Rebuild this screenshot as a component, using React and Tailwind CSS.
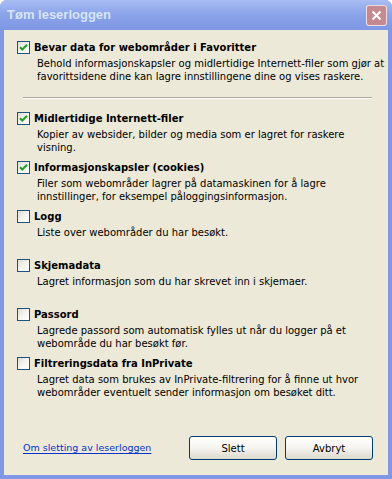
import React from 'react'

const items = [
  {
    label: 'Midlertidige Internett-filer',
    desc: 'Kopier av websider, bilder og media som er lagret for raskere visning.',
    checked: true,
  },
  {
    label: 'Informasjonskapsler (cookies)',
    desc: 'Filer som webområder lagrer på datamaskinen for å lagre innstillinger, for eksempel påloggingsinformasjon.',
    checked: true,
  },
  { label: 'Logg', desc: 'Liste over webområder du har besøkt.', checked: false },
  { label: 'Skjemadata', desc: 'Lagret informasjon som du har skrevet inn i skjemaer.', checked: false },
  {
    label: 'Passord',
    desc: 'Lagrede passord som automatisk fylles ut når du logger på et webområde du har besøkt før.',
    checked: false,
  },
  {
    label: 'Filtreringsdata fra InPrivate',
    desc: 'Lagret data som brukes av InPrivate-filtrering for å finne ut hvor webområder eventuelt sender informasjon om besøket ditt.',
    checked: false,
  },
]

function CheckBox({ checked }) {
  return (
    <span className="w-[13px] h-[13px] shrink-0 border border-[#1c5180] bg-gradient-to-br from-[#dcdbd5] via-[#f5f4ef] to-white flex items-center justify-center">
      {checked && (
        <svg width="9" height="9" viewBox="0 0 9 9">
          <path d="M1 4.2L3.3 6.5L8 1.8" stroke="#21a121" strokeWidth="2" fill="none" />
        </svg>
      )}
    </span>
  )
}

function Option({ label, desc, checked, className = '' }) {
  return (
    <div className={className}>
      <div className="flex items-center gap-[4px] h-[13px]">
        <CheckBox checked={checked} />
        <span className="font-bold text-[10px] leading-[13px] text-black">{label}</span>
      </div>
      <p className="pl-[20px] mt-[3px] text-[10px] leading-[13px] text-black">{desc}</p>
    </div>
  )
}

function XpButton({ children }) {
  return (
    <button className="w-[88px] h-[24px] rounded-[3px] border border-[#003c74] bg-gradient-to-b from-white via-[#f5f4f0] to-[#dcd9cc] text-[10px] text-black">
      {children}
    </button>
  )
}

export default function App() {
  return (
    <div
      className="w-[392px] h-[479px] flex flex-col bg-[#7f97e4] rounded-t-[7px] overflow-hidden"
      style={{ fontFamily: '"DejaVu Sans", sans-serif' }}
    >
      {/* title bar */}
      <div className="h-[30px] shrink-0 flex items-center justify-between pl-[7px] pr-[5px] bg-gradient-to-b from-[#a8bdf2] via-[#8aa2e9] to-[#7f97e4]">
        <span
          className="text-[13px] font-bold text-[#d8e4f8]"
          style={{ fontFamily: '"Liberation Sans", sans-serif' }}
        >
          Tøm leserloggen
        </span>
        <span className="w-[21px] h-[21px] rounded-[3px] border border-white/70 bg-[#c48a92] flex items-center justify-center">
          <svg width="11" height="11" viewBox="0 0 11 11">
            <path d="M1.5 1.5L9.5 9.5M9.5 1.5L1.5 9.5" stroke="white" strokeWidth="2" />
          </svg>
        </span>
      </div>

      {/* client area */}
      <div className="flex-1 mx-[4px] mb-[4px] bg-[#ece9d8] flex flex-col pl-[13px] pr-[4px] pt-[11px]">
        <Option
          label="Bevar data for webområder i Favoritter"
          desc={
            <>
              <span className="whitespace-nowrap">Behold informasjonskapsler og midlertidige Internett-filer som gjør at</span>
              <br />
              favorittsidene dine kan lagre innstillingene dine og vises raskere.
            </>
          }
          checked
          className="h-[56px]"
        />
        <div className="ml-[6px] mr-[12px] h-[2px] border-t border-[#aca899] bg-white" />
        <div className="mt-[13px]">
          {items.map((it) => (
            <Option key={it.label} {...it} className="h-[49px]" />
          ))}
        </div>
        <div className="mt-auto mb-[15px] mr-[8px] flex items-center justify-between">
          <a href="#" className="ml-[6px] text-[9.5px] text-[#0033cc] underline underline-offset-2">
            Om sletting av leserloggen
          </a>
          <div className="flex gap-[8px] mr-[3px]">
            <XpButton>Slett</XpButton>
            <XpButton>Avbryt</XpButton>
          </div>
        </div>
      </div>
    </div>
  )
}
